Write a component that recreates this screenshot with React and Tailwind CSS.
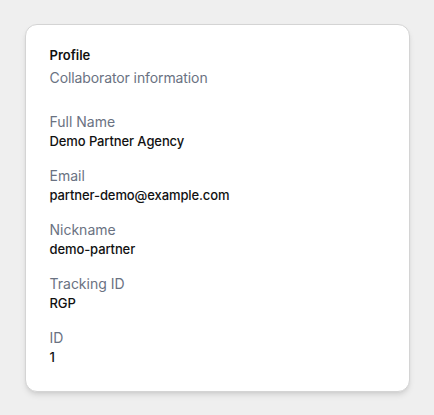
const fields = [
  { label: 'Full Name', value: 'Demo Partner Agency' },
  { label: 'Email', value: 'partner-demo@example.com' },
  { label: 'Nickname', value: 'demo-partner' },
  { label: 'Tracking ID', value: 'RGP' },
  { label: 'ID', value: '1' },
]

function App() {
  return (
    <div className="min-h-screen bg-[#efefef] pt-6 font-['Inter',sans-serif]">
      <div className="mx-auto w-[385px] bg-white rounded-xl border border-[#d4d4d4] shadow-md px-6 pt-[20px] pb-[25px]">
        <h2 className="text-[13px] leading-5 font-semibold text-[#111]">Profile</h2>
        <p className="mt-[3px] text-sm leading-5 text-gray-500 tracking-[-0.1px]">Collaborator information</p>

        <div className="mt-6 flex flex-col gap-4">
          {fields.map((f) => (
            <div key={f.label}>
              <div className="text-sm leading-5 text-gray-500">{f.label}</div>
              <div className="text-[13px] leading-[18px] font-medium text-[#111] tracking-[-0.1px]">{f.value}</div>
            </div>
          ))}
        </div>
      </div>
    </div>
  )
}

export default App
